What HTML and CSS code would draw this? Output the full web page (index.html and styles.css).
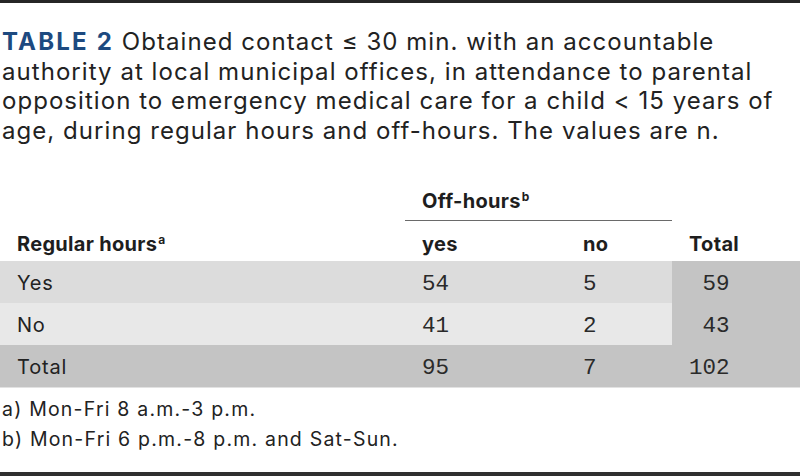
FILE: index.html
```html
<!DOCTYPE html>
<html lang="en">
<head>
<meta charset="utf-8">
<title>Table 2</title>
<link rel="stylesheet" href="styles.css">
</head>
<body>
<div class="page">
  <div class="rule-top"></div>
  <p class="caption"><span class="label">TABLE 2</span> Obtained contact ≤ 30 min. with an accountable<br>authority at local municipal offices, in attendance to parental<br>opposition to emergency medical care for a child &lt; 15 years of<br>age, during regular hours and off-hours. The values are n.</p>
  <table class="data">
    <colgroup>
      <col class="c1"><col class="c2"><col class="c3"><col class="c4">
    </colgroup>
    <thead>
      <tr class="h1">
        <th></th>
        <th colspan="2" class="span">Off-hours<sup>b</sup></th>
        <th></th>
      </tr>
      <tr class="h2">
        <th>Regular hours<sup>a</sup></th>
        <th>yes</th>
        <th>no</th>
        <th>Total</th>
      </tr>
    </thead>
    <tbody>
      <tr class="r-yes">
        <td>Yes</td>
        <td class="num">54</td>
        <td class="num">5</td>
        <td class="num tot"><span class="pad">59</span></td>
      </tr>
      <tr class="r-no">
        <td>No</td>
        <td class="num">41</td>
        <td class="num">2</td>
        <td class="num tot"><span class="pad">43</span></td>
      </tr>
      <tr class="r-total">
        <td>Total</td>
        <td class="num">95</td>
        <td class="num">7</td>
        <td class="num tot"><span class="pad">102</span></td>
      </tr>
    </tbody>
  </table>
  <div class="notes">
    <p>a) Mon-Fri 8 a.m.-3 p.m.</p>
    <p>b) Mon-Fri 6 p.m.-8 p.m. and Sat-Sun.</p>
  </div>
  <div class="rule-bottom"></div>
</div>
</body>
</html>
```

FILE: styles.css
```css
html, body {
  margin: 0;
  padding: 0;
  background: #ffffff;
}

body {
  font-family: Inter, "Liberation Sans", Arial, sans-serif;
  color: #222222;
}

.page {
  width: 800px;
  height: 476px;
  display: flex;
  flex-direction: column;
}

.rule-top {
  height: 3px;
  background: #262626;
  flex: none;
}

.caption {
  margin: 24px 0 0 0;
  padding: 0 2px;
  font-size: 24px;
  line-height: 29.5px;
  letter-spacing: 1.05px;
}

.caption .label {
  font-weight: bold;
  color: #1d4a80;
  letter-spacing: 2.2px;
}

.data {
  margin-top: 36px;
  border-collapse: collapse;
  width: 800px;
  table-layout: fixed;
  font-size: 20px;
}

.data col.c1 { width: 405px; }
.data col.c2 { width: 161px; }
.data col.c3 { width: 106px; }
.data col.c4 { width: 128px; }

.data th, .data td {
  padding: 0 0 0 17px;
  text-align: left;
  line-height: 24px;
  vertical-align: baseline;
}

.data th {
  font-weight: bold;
  color: #1e1e1e;
  letter-spacing: 0.3px;
}

.data td {
  letter-spacing: 0.8px;
}

.data sup {
  font-size: 12px;
  line-height: 0;
  vertical-align: 7px;
  margin-left: 1px;
}

.data tr.h1 th {
  padding-top: 8px;
  padding-bottom: 7px;
}

.data tr.h1 th.span {
  border-bottom: 1px solid #6a6a6a;
}

.data tr.h2 th {
  padding-top: 11px;
  padding-bottom: 5px;
}

.data tbody td {
  padding-top: 10px;
  padding-bottom: 7px;
}

.data td.num {
  font-family: "Liberation Mono", "Courier New", monospace;
  font-size: 22.5px;
  color: #2a2a2a;
  letter-spacing: 0;
}

.data .pad {
  display: inline-block;
  width: 3ch;
  text-align: right;
}

.data tr.r-yes td { background: #dcdcdc; }
.data tr.r-no td { background: #e8e8e8; }
.data tr.r-total td { background: #c4c4c4; }
.data td.tot { background: #c4c4c4 !important; }

.data tbody tr.r-total td {
  border-bottom: 1px solid #e2e2e2;
}

.notes {
  padding: 6px 2px 0 2px;
  font-size: 19.5px;
  line-height: 30px;
  letter-spacing: 1.2px;
}

.notes p {
  margin: 0;
}

.rule-bottom {
  margin-top: auto;
  height: 4px;
  background: #2f2f2f;
  flex: none;
}
```
